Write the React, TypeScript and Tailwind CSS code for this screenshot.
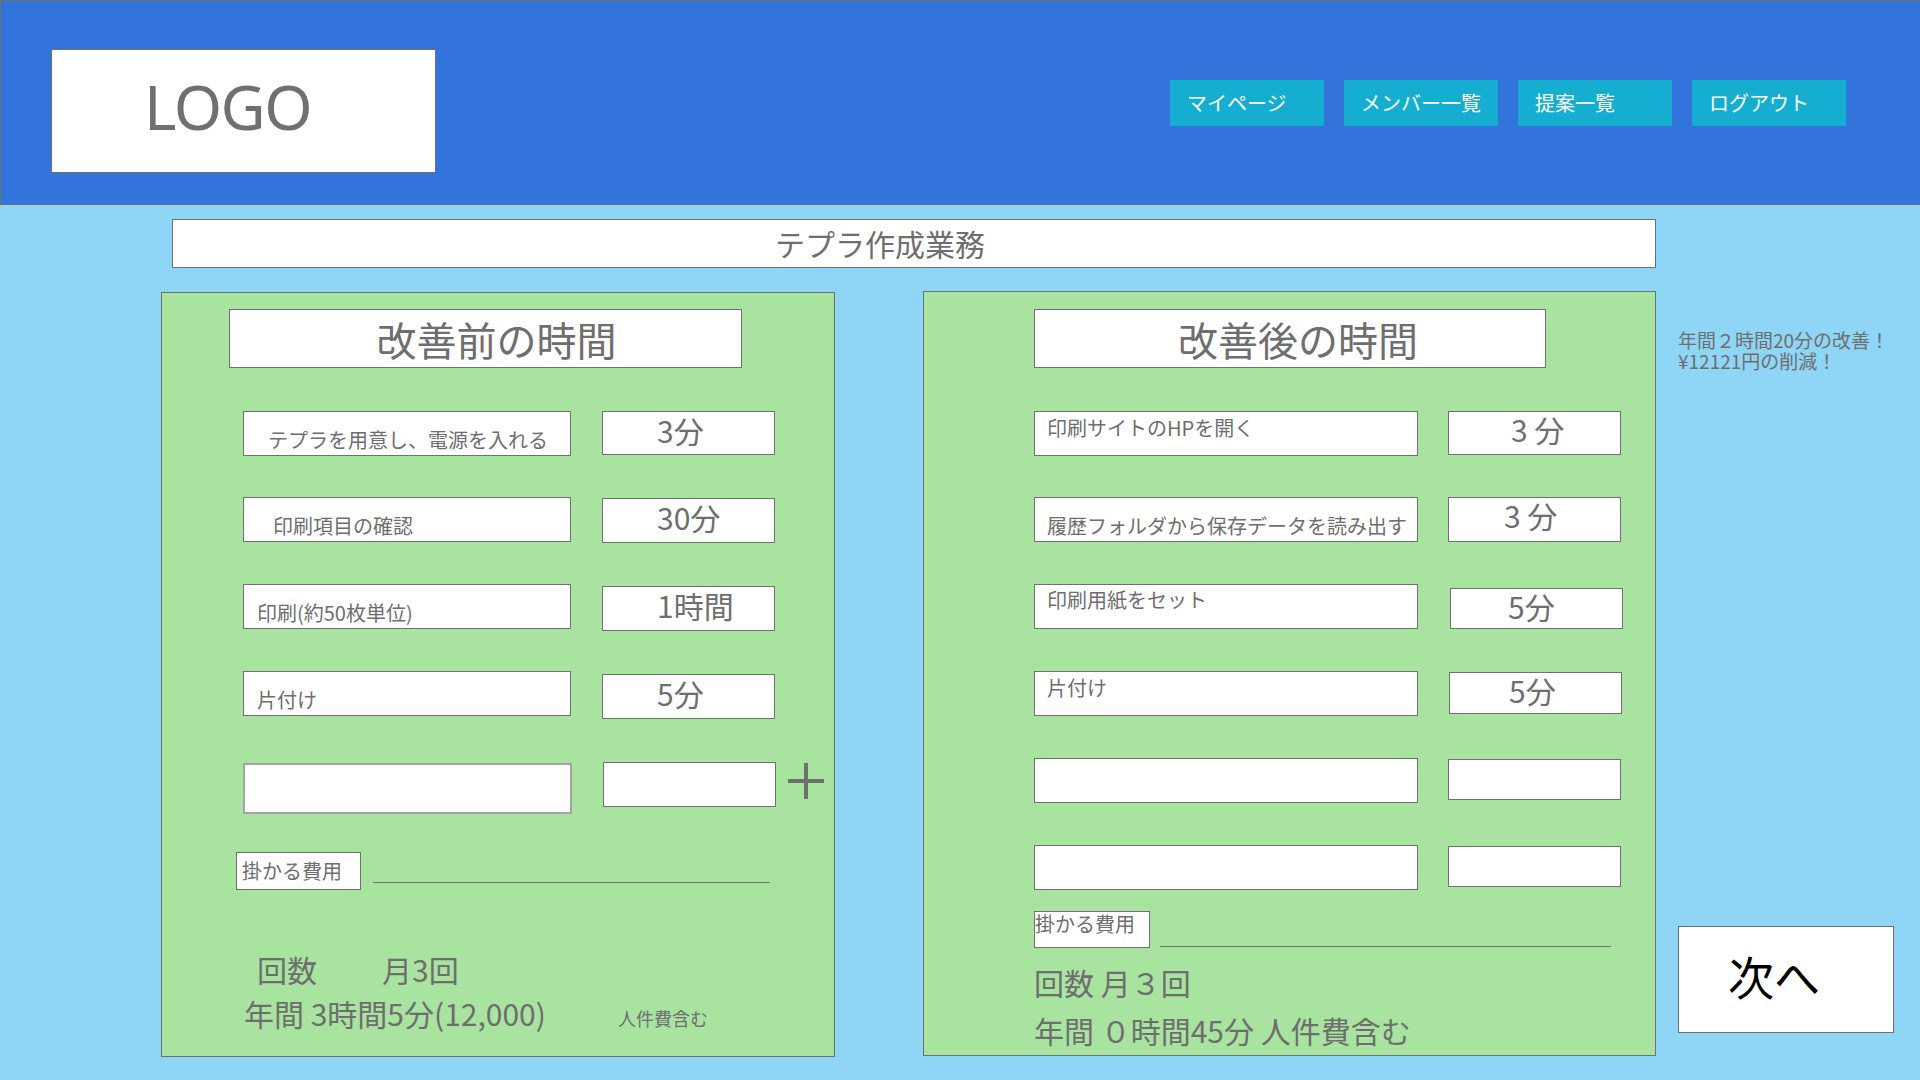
import React from "react";

const FONT = { fontFamily: '"Noto Sans CJK JP", "Noto Sans", sans-serif' };

type Row = { label: string; time: string; rowCls: string; labelCls: string; timeCls: string; timeText: string };

const beforeRows: Row[] = [
  { label: "テプラを用意し、電源を入れる", time: "3分", rowCls: "mt-0", labelCls: "pl-[24px] pt-[16px]", timeCls: "mt-0 h-[44px]", timeText: "pl-[54px]" },
  { label: "印刷項目の確認", time: "30分", rowCls: "mt-[41px]", labelCls: "pl-[29px] pt-[16px]", timeCls: "mt-[1px] h-[45px]", timeText: "pl-[54px]" },
  { label: "印刷(約50枚単位)", time: "1時間", rowCls: "mt-[42px]", labelCls: "pl-[13px] pt-[16px]", timeCls: "mt-[2px] h-[45px]", timeText: "pl-[54px]" },
  { label: "片付け", time: "5分", rowCls: "mt-[42px]", labelCls: "pl-[13px] pt-[16px]", timeCls: "mt-[3px] h-[45px]", timeText: "pl-[54px]" },
];

const afterRows: Row[] = [
  { label: "印刷サイトのHPを開く", time: "3 分", rowCls: "mt-0", labelCls: "pl-[12px] pt-[4px]", timeCls: "mt-0 ml-0 h-[44px]", timeText: "pl-[62px]" },
  { label: "履歴フォルダから保存データを読み出す", time: "3 分", rowCls: "mt-[41px]", labelCls: "pl-[12px] pt-[16px]", timeCls: "mt-0 ml-0 h-[45px]", timeText: "pl-[55px]" },
  { label: "印刷用紙をセット", time: "5分", rowCls: "mt-[42px]", labelCls: "pl-[12px] pt-[3px]", timeCls: "mt-[4px] ml-[2px] h-[41px]", timeText: "pl-[57px]" },
  { label: "片付け", time: "5分", rowCls: "mt-[42px]", labelCls: "pl-[12px] pt-[4px]", timeCls: "mt-[1px] ml-[1px] h-[42px]", timeText: "pl-[59px]" },
  { label: "", time: "", rowCls: "mt-[42px]", labelCls: "", timeCls: "mt-[1px] ml-0 h-[41px]", timeText: "" },
  { label: "", time: "", rowCls: "mt-[42px]", labelCls: "", timeCls: "mt-[1px] ml-0 h-[41px]", timeText: "" },
];

function Plus() {
  return (
    <svg width="38" height="38" viewBox="0 0 38 38" className="ml-[11px]">
      <path d="M19 1v36M1 19h36" stroke="#707070" strokeWidth="4" fill="none" />
    </svg>
  );
}

export default function App() {
  return (
    <div className="w-[1920px] h-[1080px] overflow-hidden bg-[#8fd5f5] text-[#6e6e6e]" style={FONT}>
      {/* header */}
      <header className="h-[205px] bg-[#3373dc] border border-r-0 border-[#707070] flex items-start">
        <div className="ml-[50px] mt-[48px] w-[385px] h-[124px] bg-white border border-[#707070] flex items-center pl-[92px] pb-[10px]">
          <span className="text-[62px] tracking-tight text-[#707070]" style={{ fontFamily: '"Noto Sans", sans-serif' }}>LOGO</span>
        </div>
        <nav className="ml-auto mr-[74px] mt-[79px] flex gap-[20px]">
          {["マイページ", "メンバー一覧", "提案一覧", "ログアウト"].map((t) => (
            <div key={t} className="w-[154px] h-[46px] bg-[#16aed0] text-white text-[20px] pl-[17px] flex items-center">
              {t}
            </div>
          ))}
        </nav>
      </header>

      <div className="pt-[14px]">
        <div className="ml-[172px] w-[1484px] h-[49px] bg-white border border-[#707070] flex items-center justify-center pr-[68px] text-[30px]">
          テプラ作成業務
        </div>

        <div className="mt-[24px] flex items-start">
          {/* before */}
          <section className="ml-[161px] w-[674px] h-[765px] bg-[#a8e4a0] border border-[#707070] flex flex-col">
            <div className="ml-[67px] mt-[16px] w-[513px] h-[59px] bg-white border border-[#707070] flex items-center justify-center pl-[22px] text-[40px]">
              改善前の時間
            </div>
            <div className="ml-[81px] mt-[43px] flex flex-col">
              {beforeRows.map((r) => (
                <div key={r.label} className={`h-[45px] flex items-start gap-[31px] ${r.rowCls}`}>
                  <div className={`w-[328px] h-[45px] shrink-0 bg-white border border-[#707070] text-[20px] leading-[24px] ${r.labelCls}`}>{r.label}</div>
                  <div className={`w-[173px] shrink-0 bg-white border border-[#707070] text-[30px] leading-[36px] ${r.timeCls} ${r.timeText}`}>{r.time}</div>
                </div>
              ))}
              <div className="h-[52px] flex items-start gap-[31px] mt-[46px]">
                <div className="w-[329px] h-[51px] mt-[1px] bg-white border-2 border-[#a3a3a3]" />
                <div className="flex items-start">
                  <div className="w-[173px] h-[45px] bg-white border border-[#707070]" />
                  <Plus />
                </div>
              </div>
            </div>
            <div className="ml-[74px] mt-[38px] flex items-start">
              <div className="w-[125px] h-[38px] bg-white border border-[#707070] flex items-center pl-[5px] text-[20px]">掛かる費用</div>
              <div className="ml-[12px] mt-[30px] w-[397px] h-px bg-[#707070]" />
            </div>
            <div className="ml-[95px] mt-[61px] flex text-[30px] leading-[36px]">
              <span>回数</span>
              <span className="ml-[65px]">月3回</span>
            </div>
            <div className="ml-[82px] mt-[8px] flex items-baseline">
              <span className="text-[30px] leading-[36px]">年間 3時間5分(12,000)</span>
              <span className="ml-[72px] text-[18px]">人件費含む</span>
            </div>
          </section>

          {/* after */}
          <section className="ml-[88px] -mt-[1px] w-[733px] h-[765px] bg-[#a8e4a0] border border-[#707070] flex flex-col">
            <div className="ml-[110px] mt-[17px] w-[512px] h-[59px] bg-white border border-[#707070] flex items-center justify-center pl-[16px] text-[40px]">
              改善後の時間
            </div>
            <div className="ml-[110px] mt-[43px] flex flex-col">
              {afterRows.map((r, i) => (
                <div key={i} className={`h-[45px] flex items-start gap-[30px] ${r.rowCls}`}>
                  <div className={`w-[384px] h-[45px] shrink-0 bg-white border border-[#707070] text-[20px] leading-[24px] ${r.labelCls}`}>{r.label}</div>
                  <div className={`w-[173px] shrink-0 bg-white border border-[#707070] text-[30px] leading-[30px] pt-[2px] ${r.timeCls} ${r.timeText}`}>{r.time}</div>
                </div>
              ))}
            </div>
            <div className="ml-[110px] mt-[21px] flex items-start">
              <div className="w-[116px] h-[37px] bg-white border border-[#707070] text-[20px] leading-[20px] pt-[2px] whitespace-nowrap">掛かる費用</div>
              <div className="ml-[10px] mt-[35px] w-[451px] h-px bg-[#707070]" />
            </div>
            <div className="ml-[110px] mt-[16px] text-[30px] leading-[36px]">回数 月３回</div>
            <div className="ml-[110px] mt-[12px] text-[30px] leading-[36px]">年間 ０時間45分 人件費含む</div>
          </section>

          {/* side */}
          <aside className="ml-[22px] w-[216px] h-[765px] flex flex-col">
            <p className="pt-[37px] text-[19px] leading-[21px] whitespace-nowrap">
              年間２時間20分の改善！
              <br />
              ¥12121円の削減！
            </p>
            <button className="mt-auto mb-[24px] w-[216px] h-[107px] bg-white border border-[#707070] flex items-center justify-center pr-[24px] pb-[8px] text-[46px] text-black">
              次へ
            </button>
          </aside>
        </div>
      </div>
    </div>
  );
}
